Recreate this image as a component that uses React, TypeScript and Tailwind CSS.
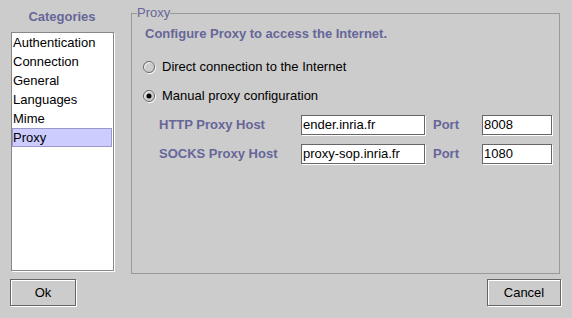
import { useState } from 'react'

const categories = ['Authentication', 'Connection', 'General', 'Languages', 'Mime', 'Proxy']

function Radio({ checked }: { checked: boolean }) {
    return (
        <svg width="13" height="13" viewBox="0 0 13 13" className="shrink-0">
            <circle cx="7" cy="7" r="5.5" fill="none" stroke="#ffffff" />
            <circle cx="6" cy="6" r="5.5" fill="none" stroke="#666666" />
            {checked && <circle cx="6" cy="6" r="2.5" fill="#000000" />}
        </svg>
    )
}

function Field({ value, className }: { value: string; className: string }) {
    return (
        <div
            className={`h-[20px] bg-white border border-[#666666] shadow-[1px_1px_0_#ffffff] pl-[1px] leading-[18px] text-black ${className}`}
        >
            {value}
        </div>
    )
}

function Button({ label, className }: { label: string; className: string }) {
    return (
        <button
            className={`h-[27px] border border-[#666666] bg-[#cccccc] shadow-[inset_1px_1px_0_#ffffff,1px_1px_0_#ffffff] text-black leading-[25px] text-center ${className}`}
        >
            {label}
        </button>
    )
}

export default function App() {
    const [selected, setSelected] = useState('Proxy')
    const [mode, setMode] = useState<'direct' | 'manual'>('manual')

    return (
        <div className="w-[572px] h-[318px] bg-[#cccccc] text-[13px] text-black font-['Liberation_Sans',Arial,sans-serif] overflow-hidden">
            <div className="flex items-start pl-[10px] pr-[12px]">
                {/* categories list */}
                <div className="w-[104px] pt-[8px] flex flex-col">
                    <div className="h-[18px] leading-[18px] text-center font-bold text-[#666699]">Categories</div>
                    <div className="mt-[6px] ml-px h-[239px] bg-white border border-[#888888] shadow-[1px_1px_0_#ffffff]">
                        {categories.map(c => (
                            <div
                                key={c}
                                onClick={() => setSelected(c)}
                                className={`h-[19px] leading-[17px] mr-px border ${
                                    c === selected ? 'bg-[#ccccff] border-[#9999cc]' : 'border-transparent'
                                }`}
                            >
                                {c}
                            </div>
                        ))}
                    </div>
                </div>

                {/* proxy panel */}
                <fieldset className="ml-[17px] mt-[6px] flex-1 h-[268px] border border-[#999999]">
                    <legend className="ml-[5px] leading-[14px] text-[#666699]">Proxy</legend>
                    <div className="pl-[11px] flex flex-col">
                        <div className="mt-[5px] pl-[2px] h-[18px] leading-[18px] font-bold text-[#666699]">
                            Configure Proxy to access the Internet.
                        </div>
                        <div
                            className="mt-[15px] h-[18px] flex items-center gap-[6px] leading-[18px]"
                            onClick={() => setMode('direct')}
                        >
                            <Radio checked={mode === 'direct'} />
                            <span>Direct connection to the Internet</span>
                        </div>
                        <div
                            className="mt-[11px] h-[18px] flex items-center gap-[6px] leading-[18px]"
                            onClick={() => setMode('manual')}
                        >
                            <Radio checked={mode === 'manual'} />
                            <span>Manual proxy configuration</span>
                        </div>
                        <div className="mt-[10px] pl-[16px] grid grid-cols-[142px_124px_57px_70px] gap-y-[9px] items-center font-bold text-[#666699] leading-[18px]">
                            <span>HTTP Proxy Host</span>
                            <Field value="ender.inria.fr" className="font-normal" />
                            <span className="pl-[8px]">Port</span>
                            <Field value="8008" className="font-normal" />
                            <span>SOCKS Proxy Host</span>
                            <Field value="proxy-sop.inria.fr" className="font-normal" />
                            <span className="pl-[8px]">Port</span>
                            <Field value="1080" className="font-normal" />
                        </div>
                    </div>
                </fieldset>
            </div>

            <div className="mt-[5px] flex justify-between pl-[10px] pr-[11px]">
                <Button label="Ok" className="w-[66px]" />
                <Button label="Cancel" className="w-[74px]" />
            </div>
        </div>
    )
}
